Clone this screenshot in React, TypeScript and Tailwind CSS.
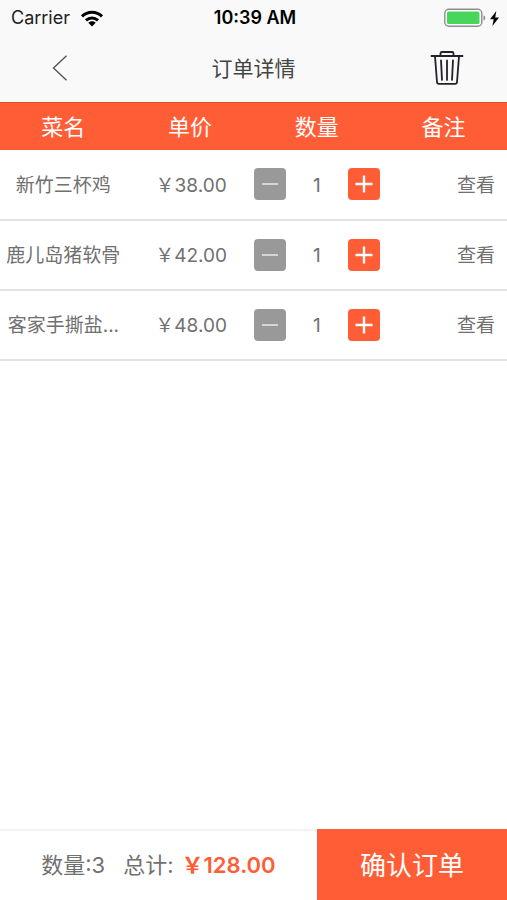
// src/App.tsx
import { useState } from 'react';

const initialDishes = [
  { name: '新竹三杯鸡', price: 38, count: 1 },
  { name: '鹿儿岛猪软骨', price: 42, count: 1 },
  { name: '客家手撕盐...', price: 48, count: 1 },
];

function StatusBar() {
  return (
    <div className="grid grid-cols-3 items-center h-9 pl-[11px] pr-2 text-lg text-black">
      <div className="flex items-center gap-2.5">
        <span className="text-[#222]">Carrier</span>
        <svg width="24" height="17" viewBox="0 0 24 17" fill="none" stroke="#000" strokeWidth="3" aria-hidden="true">
          <path d="M2 6.4C7.6.8 16.4.8 22 6.4" />
          <path d="M6 10.4c3.4-3.3 8.600-3.300 12 0" />
          <path d="M12 16.500 8.300 12.700c2.200-1.900 5.200-1.900 7.400 0z" fill="#000" stroke="none" />
        </svg>
      </div>
      <span className="text-center font-semibold whitespace-nowrap">10:39 AM</span>
      <div className="flex items-center justify-end gap-1">
        <svg width="42" height="20" viewBox="0 0 42 20" aria-hidden="true">
          <rect x="0.800" y="1.300" width="37" height="17" rx="4" fill="#fff" stroke="#8e8e8e" strokeWidth="1.400" />
          <rect x="3" y="3.500" width="32.500" height="12.500" rx="1.500" fill="#46d65c" />
          <path d="M39.500 7.200c2.300.8 2.300 4.600 0 5.400z" fill="#8e8e8e" />
        </svg>
        <svg width="9" height="15" viewBox="0 0 9 15" fill="#000" aria-hidden="true">
          <path d="M6.300 0 0 8.300h3.700L2.400 15 9 6.400H5.200z" />
        </svg>
      </div>
    </div>
  );
}

function TrashIcon() {
  return (
    <svg width="34" height="36" viewBox="0 0 34 36" fill="none" stroke="#22222c" strokeWidth="1.800" aria-hidden="true">
      <path d="M.8 6h32.400" />
      <path d="M10.500 6V3.400c0-.8.5-1.400 1.400-1.400h10.200c.9 0 1.400.6 1.400 1.400V6" />
      <path d="M5 6.400 7 32c.1 1.200.7 1.800 1.800 1.800h16.400c1.100 0 1.700-.6 1.800-1.800L29 6.400" />
      <path d="M11 10.400 12 29.900M17 10.400v19.500M23 10.400 22 29.900" strokeWidth="1.800" strokeLinecap="round" />
    </svg>
  );
}

export default function App() {
  const [dishes, setDishes] = useState(initialDishes);

  const changeCount = (index: number, step: number) => {
    setDishes(dishes.map((d, i) => (i === index ? { ...d, count: Math.max(1, d.count + step) } : d)));
  };

  const count = dishes.reduce((sum, d) => sum + d.count, 0);
  const total = dishes.reduce((sum, d) => sum + d.count * d.price, 0);

  return (
    <div className="flex flex-col min-h-screen bg-white text-[#707070] font-[Inter,'Noto_Sans_CJK_SC',sans-serif]">
      <header className="bg-[#f9f9f9]">
        <StatusBar />
        <div className="grid grid-cols-[120px_1fr_120px] items-center h-[66px] pb-0.5">
          <button aria-label="返回" className="justify-self-center">
            <svg width="16" height="26" viewBox="0 0 16 26" fill="none" stroke="#555" strokeWidth="1.400" aria-hidden="true">
              <path d="M14.500.8 1.500 13l13 12.200" />
            </svg>
          </button>
          <h1 className="pt-0.5 text-center text-[21px] text-[#444]">订单详情</h1>
          <button aria-label="清空订单" className="justify-self-center">
            <TrashIcon />
          </button>
        </div>
      </header>

      <main className="flex-1">
        <table className="w-full table-fixed">
          <thead>
            <tr className="h-[47px] bg-[#ff5d36] border-t border-[#d94f30] text-[22px] text-white">
              <th className="pt-0.5 font-normal">菜名</th>
              <th className="pt-0.5 font-normal">单价</th>
              <th className="pt-0.5 font-normal">数量</th>
              <th className="pt-0.5 font-normal">备注</th>
            </tr>
          </thead>
          <tbody>
            {dishes.map((d, i) => (
              <tr key={d.name} className="h-[70px] border-b-2 border-[#e2e2e2] text-[19px]">
                <td className="pt-1 text-center whitespace-nowrap">{d.name}</td>
                <td className="pt-1 pl-0.5 text-center">￥{d.price.toFixed(2)}</td>
                <td>
                  <div className="flex items-center justify-between">
                    <button
                      aria-label="减少"
                      className="flex items-center justify-center size-8 rounded bg-[#999]"
                      onClick={() => changeCount(i, -1)}
                    >
                      <svg width="18" height="18" viewBox="0 0 18 18" stroke="#e4e4e4" strokeWidth="1.600" aria-hidden="true">
                        <path d="M1 9h16" />
                      </svg>
                    </button>
                    <span className="pt-1">{d.count}</span>
                    <button
                      aria-label="增加"
                      className="flex items-center justify-center size-8 rounded bg-[#ff5d36]"
                      onClick={() => changeCount(i, 1)}
                    >
                      <svg width="18" height="18" viewBox="0 0 18 18" stroke="#fff" strokeWidth="2.400" aria-hidden="true">
                        <path d="M.5 9h17M9 .5v17" />
                      </svg>
                    </button>
                  </div>
                </td>
                <td className="pt-1 pr-3 text-right">
                  <button>查看</button>
                </td>
              </tr>
            ))}
          </tbody>
        </table>
      </main>

      <footer className="flex h-[71px] text-[22px]">
        <div className="flex flex-5 items-center justify-center border-t-2 border-[#f3f3f3] whitespace-nowrap">
          <span className="mr-4.5">数量:{count}</span>
          <span className="mr-2">总计:</span>
          <span className="font-semibold text-[#ff5d36]">￥{total.toFixed(2)}</span>
        </div>
        <button className="flex-3 pt-0.5 bg-[#ff5d36] text-[26px] text-white">确认订单</button>
      </footer>
    </div>
  );
}
